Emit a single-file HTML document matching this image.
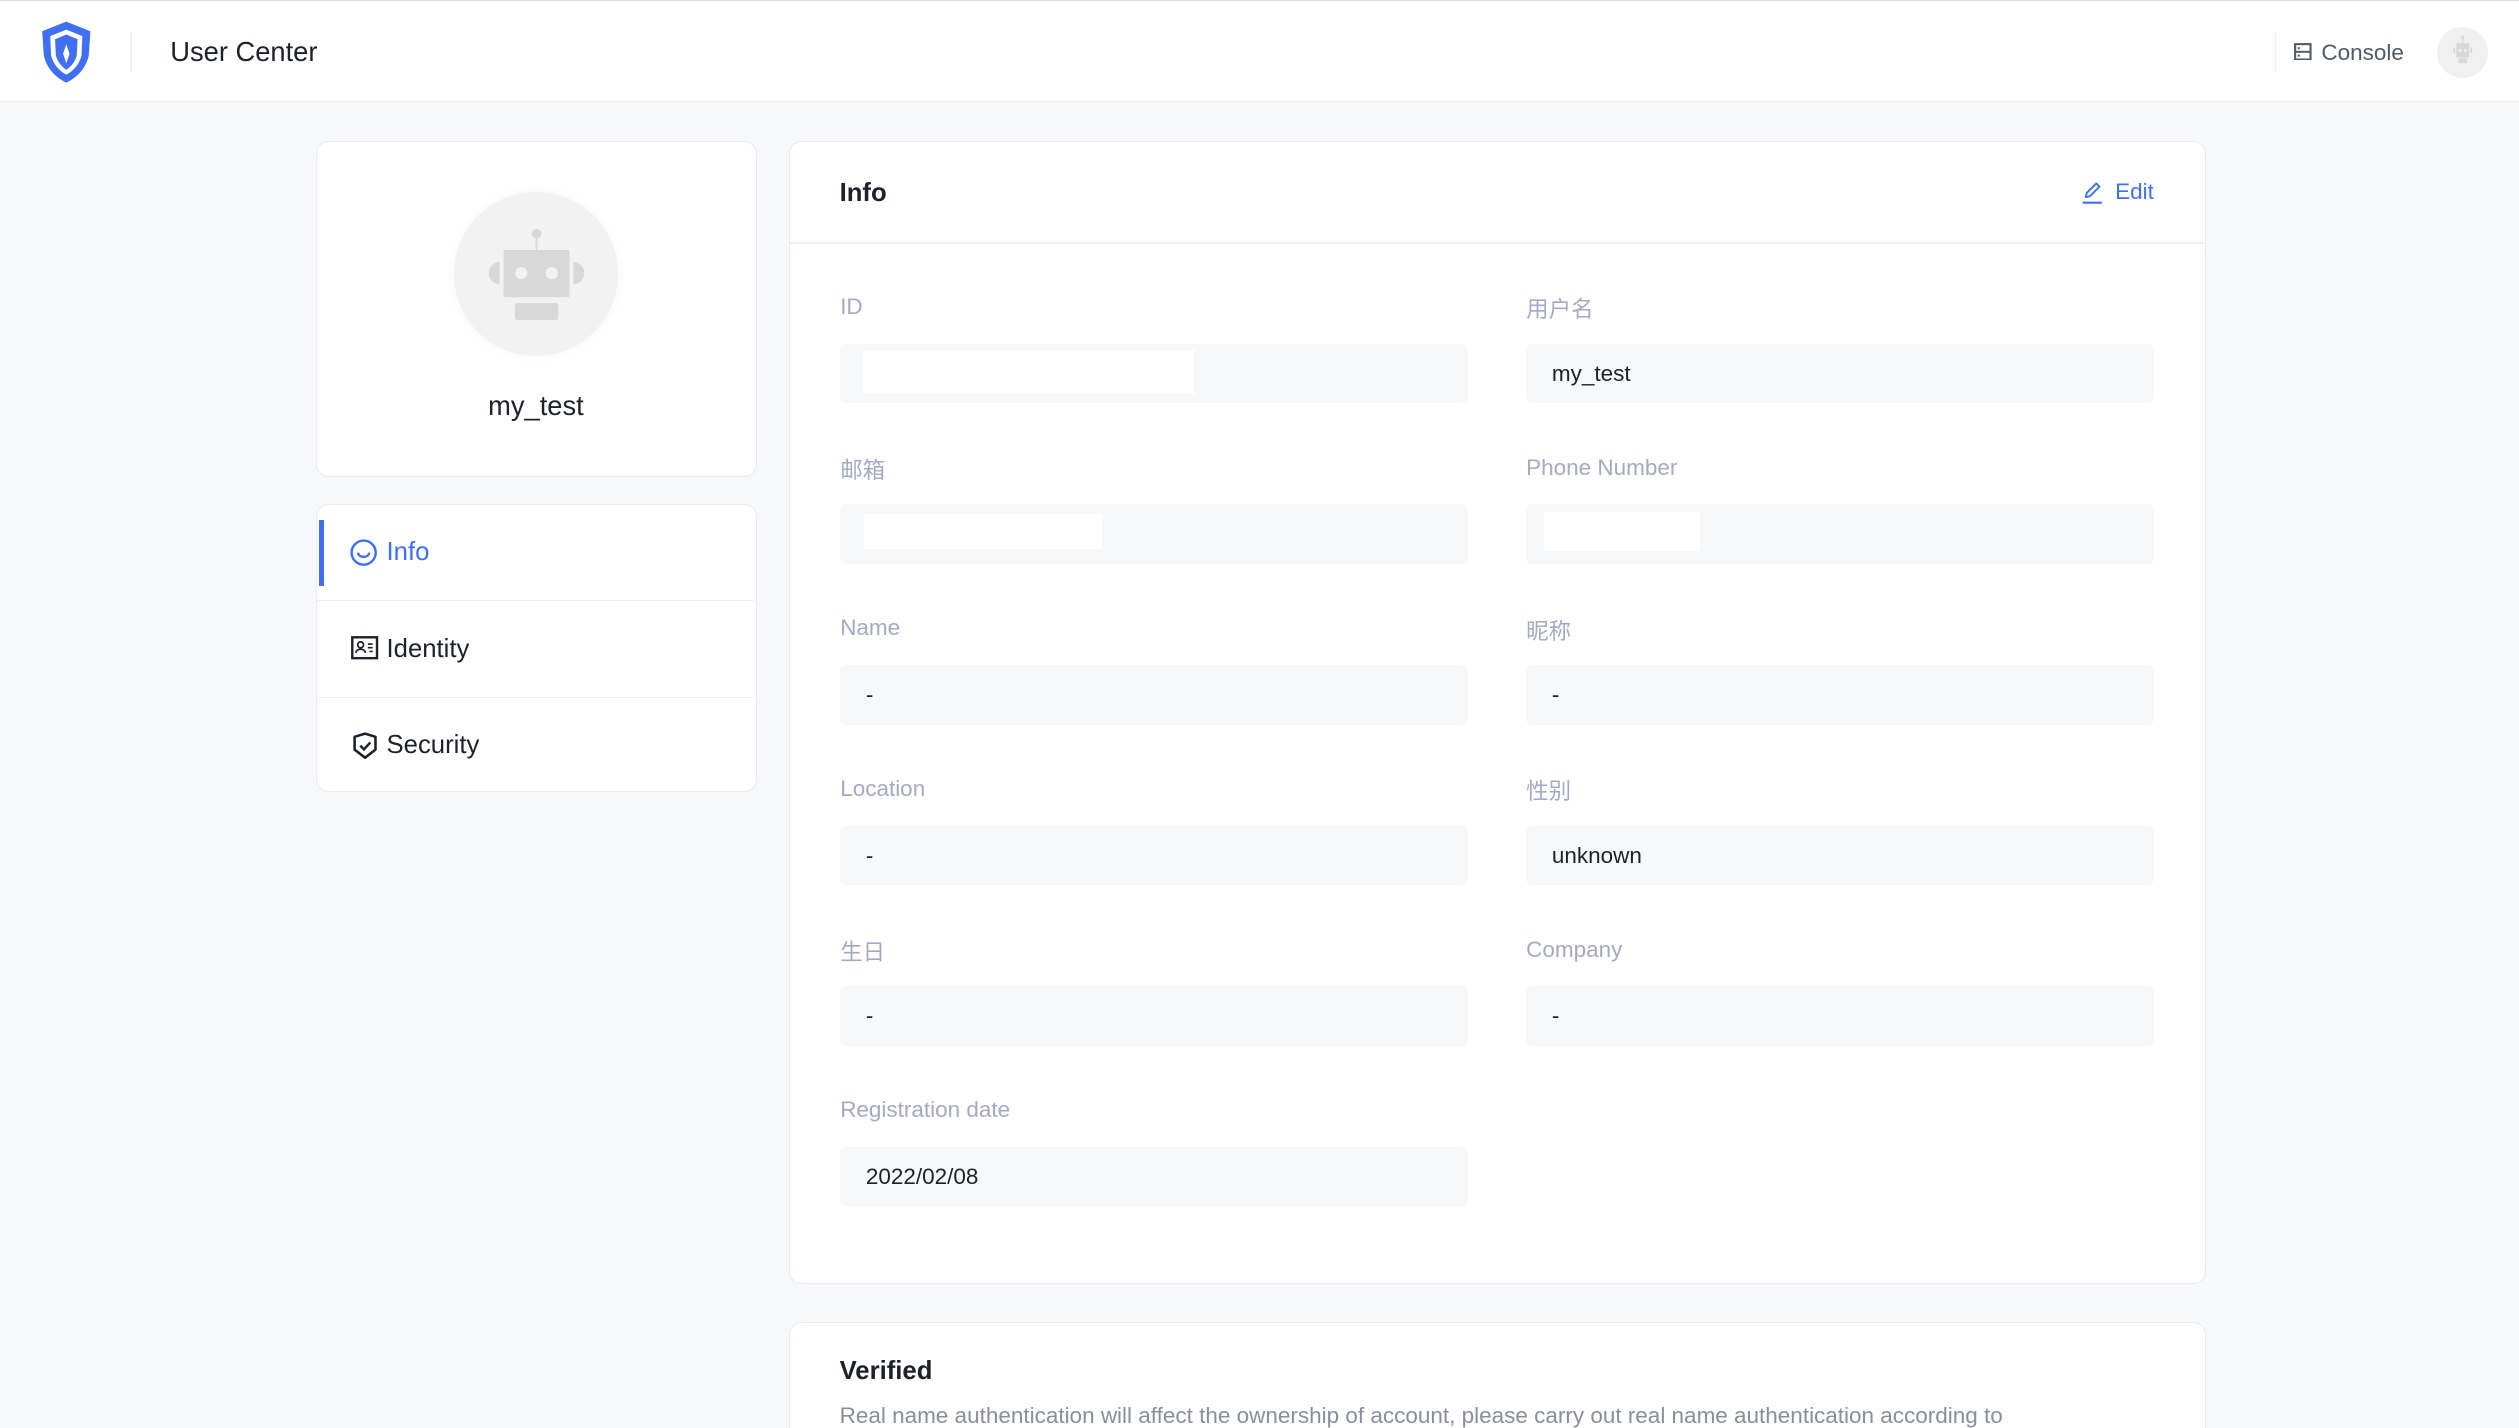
<!DOCTYPE html>
<html><head><meta charset="utf-8"><style>
html,body{margin:0;padding:0;}
html{zoom:1.6065;height:889px;overflow:hidden;}
body{width:1568px;height:889px;overflow:hidden;background:#f6f8fb;font-family:"Liberation Sans","Noto Sans CJK SC",sans-serif;position:relative;color:#1d2129;}
.a{position:absolute;}
.hdr{left:0;top:0;width:1568px;height:62px;background:#fff;border-top:1px solid #ddd;border-bottom:1px solid #ebedf0;}
.card{background:#fff;border:1px solid #e8eaee;border-radius:8px;box-sizing:border-box;}
.lbl{font-size:14px;color:#a3aac4;}
.inp{width:391px;height:37px;background:#f7f8fa;border-radius:4px;font-size:14px;line-height:37px;box-sizing:border-box;padding-left:16px;color:#1d2129;}
.wb{background:#fff;}
.mi{left:0;width:272px;height:59px;font-size:16px;line-height:59px;}
</style></head><body>
<div class="a hdr">
  <svg class="a" style="left:24px;top:12px" width="34" height="40" viewBox="0 0 34 40">
    <path d="M17 1 L32 7 L31 22 C29 31 23 36 17 39 C11 36 5 31 3 22 L2 7 Z" fill="#3f6ff5"/>
    <path d="M17 6 L27 10 L26.5 22 C25 28 21 32 17 34 C13 32 9 28 7.5 22 L7 10 Z" fill="#fff"/>
    <path d="M17 9 L24 12 L23.5 22 C22.5 26 20 29 17 31 C14 29 11.5 26 10.5 22 L10 12 Z" fill="#3f6ff5"/>
    <path d="M17 15 L19 21 L17 27 L15 21 Z" fill="#fff"/>
  </svg>
  <div class="a" style="left:81px;top:19px;width:1px;height:25px;background:#eee"></div>
  <div class="a" style="left:106px;top:22px;font-size:17px;font-weight:500;color:#1d2129">User Center</div>
  <div class="a" style="left:1416px;top:19px;width:1px;height:25px;background:#eee"></div>
  <svg class="a" style="left:1428px;top:26px" width="11" height="11" viewBox="0 0 11 11"><rect x="0.7" y="0.7" width="9.6" height="9.6" fill="none" stroke="#4e5969" stroke-width="1.3"/><line x1="0.7" y1="5.5" x2="10.3" y2="5.5" stroke="#4e5969" stroke-width="1.2"/><rect x="2.3" y="2.6" width="1.3" height="1.3" fill="#4e5969"/><rect x="2.3" y="7.2" width="1.3" height="1.3" fill="#4e5969"/></svg>
  <div class="a" style="left:1445px;top:24px;font-size:14px;color:#4e5969">Console</div>
  <div class="a" style="left:1517px;top:16px;width:32px;height:32px;border-radius:50%;background:#f0f0f0"></div>
  <svg class="a" style="left:1517px;top:16px" width="32" height="32" viewBox="0 0 32 32"><circle cx="16" cy="6.5" r="1" fill="#d8d8d8"/><rect x="15.6" y="7" width="0.8" height="3" fill="#d8d8d8"/><rect x="12" y="10" width="8" height="9" fill="#d8d8d8"/><path d="M11.3 12.5 C9.5 13 9.5 16 11.3 16.5Z M20.7 12.5 C22.5 13 22.5 16 20.7 16.5Z" fill="#d8d8d8"/><rect x="13.3" y="19.5" width="5.4" height="3" rx="0.6" fill="#d8d8d8"/><circle cx="14.3" cy="14.5" r="0.9" fill="#f0f0f0"/><circle cx="17.7" cy="14.5" r="0.9" fill="#f0f0f0"/></svg>
</div>

<div class="a card" style="left:197px;top:88px;width:274px;height:209px;">
  <div class="a" style="left:85px;top:31px;width:102px;height:102px;border-radius:50%;background:#f2f2f2;box-shadow:0 0 6px rgba(0,0,0,0.04)"></div>
  <div class="a" style="left:0;width:272px;top:154px;text-align:center;font-size:17px;font-weight:500;color:#1d2129">my_test</div>
</div>
<svg class="a" style="left:0;top:0" width="600" height="300" viewBox="0 0 600 300">
  <circle cx="334" cy="145.5" r="3" fill="#d8d8d8"/>
  <rect x="333.4" y="147" width="1.2" height="9" fill="#d8d8d8"/>
  <rect x="313.5" y="155.6" width="41" height="29.4" rx="1" fill="#d8d8d8"/>
  <circle cx="324.5" cy="170" r="3.8" fill="#f2f2f2"/>
  <circle cx="343.5" cy="170" r="3.8" fill="#f2f2f2"/>
  <path d="M311 163 C302 164 302 176 311 177 Z" fill="#d8d8d8"/>
  <path d="M357 163 C366 164 366 176 357 177 Z" fill="#d8d8d8"/>
  <rect x="320.5" y="188.6" width="27" height="10.6" rx="1.5" fill="#d8d8d8"/>
</svg>

<div class="a card" style="left:197px;top:314px;width:274px;height:179px;">
  <div class="a mi" style="top:0;border-bottom:1px solid #eef0f3;color:#3f6ff5">
    <div class="a" style="left:1px;top:9px;width:3px;height:41px;background:#3f6ff5"></div>
    <svg class="a" style="left:20px;top:21px" width="17" height="17" viewBox="0 0 17 17"><circle cx="8.5" cy="8.5" r="7.5" fill="none" stroke="#3f6ff5" stroke-width="1.5"/><path d="M5 8.5 C5.5 12 11.5 12 12 8.5" fill="none" stroke="#3f6ff5" stroke-width="1.5"/></svg>
    <span class="a" style="left:43px">Info</span>
  </div>
  <div class="a mi" style="top:60px;border-bottom:1px solid #eef0f3;color:#1d2129">
    <svg class="a" style="left:21px;top:21px" width="17" height="15" viewBox="0 0 17 15"><rect x="0.8" y="0.8" width="15.4" height="13" fill="none" stroke="#1d2129" stroke-width="1.5"/><circle cx="6" cy="5.5" r="1.8" fill="none" stroke="#1d2129" stroke-width="1.1"/><path d="M3 10.5 C3.5 7.5 8.5 7.5 9 10.5" fill="none" stroke="#1d2129" stroke-width="1.1"/><path d="M10.5 5h3M10.5 7.3h3M11.5 9.6h2" stroke="#1d2129" stroke-width="1"/></svg>
    <span class="a" style="left:43px">Identity</span>
  </div>
  <div class="a mi" style="top:120px;color:#1d2129">
    <svg class="a" style="left:22px;top:21px" width="15" height="17" viewBox="0 0 15 17"><path d="M7.5 1 L14 3 L14 11 L7.5 16 L1 11 L1 3 Z" fill="none" stroke="#1d2129" stroke-width="1.6" stroke-linejoin="round"/><path d="M4.5 8.5 L6.8 10.8 L10.8 6.5" fill="none" stroke="#1d2129" stroke-width="1.5"/></svg>
    <span class="a" style="left:43px">Security</span>
  </div>
</div>

<div class="a card" style="left:491px;top:88px;width:882px;height:711px;">
  <div class="a" style="left:31px;top:23px;font-size:16px;font-weight:600">Info</div>
  <svg class="a" style="left:804px;top:24px" width="14" height="15" viewBox="0 0 14 15"><path d="M3 10 L3.5 7.5 L9.5 1.5 L11.5 3.5 L5.5 9.5 Z" fill="none" stroke="#3f6ff5" stroke-width="1.2" stroke-linejoin="round"/><line x1="1" y1="13.5" x2="13" y2="13.5" stroke="#3f6ff5" stroke-width="1.3"/></svg>
  <div class="a" style="left:825px;top:23px;font-size:14px;color:#3f6ff5">Edit</div>
  <div class="a" style="left:0;top:62px;width:880px;height:1px;background:#eef0f3"></div>
</div>

<div class="a lbl" style="left:523px;top:183px">ID</div>
<div class="a inp" style="left:523px;top:214px"></div>
<div class="a wb" style="left:537px;top:218px;width:206px;height:27px"></div>
<div class="a lbl" style="left:950px;top:182px">用户名</div>
<div class="a inp" style="left:950px;top:214px">my_test</div>

<div class="a lbl" style="left:523px;top:282px">邮箱</div>
<div class="a inp" style="left:523px;top:314px"></div>
<div class="a wb" style="left:538px;top:320px;width:148px;height:22px"></div>
<div class="a lbl" style="left:950px;top:283px">Phone Number</div>
<div class="a inp" style="left:950px;top:314px"></div>
<div class="a wb" style="left:961px;top:319px;width:97px;height:24px"></div>

<div class="a lbl" style="left:523px;top:383px">Name</div>
<div class="a inp" style="left:523px;top:414px">-</div>
<div class="a lbl" style="left:950px;top:382px">昵称</div>
<div class="a inp" style="left:950px;top:414px">-</div>

<div class="a lbl" style="left:523px;top:483px">Location</div>
<div class="a inp" style="left:523px;top:514px">-</div>
<div class="a lbl" style="left:950px;top:482px">性别</div>
<div class="a inp" style="left:950px;top:514px">unknown</div>

<div class="a lbl" style="left:523px;top:582px">生日</div>
<div class="a inp" style="left:523px;top:614px">-</div>
<div class="a lbl" style="left:950px;top:583px">Company</div>
<div class="a inp" style="left:950px;top:614px">-</div>

<div class="a lbl" style="left:523px;top:683px">Registration date</div>
<div class="a inp" style="left:523px;top:714px">2022/02/08</div>

<div class="a card" style="left:491px;top:823px;width:882px;height:66px;border-bottom:none;border-radius:8px 8px 0 0;">
  <div class="a" style="left:31px;top:21px;font-size:16px;font-weight:600">Verified</div>
  <div class="a" style="left:31px;top:50px;font-size:14px;color:#86909c;white-space:nowrap">Real name authentication will affect the ownership of account, please carry out real name authentication according to</div>
</div>
</body></html>
